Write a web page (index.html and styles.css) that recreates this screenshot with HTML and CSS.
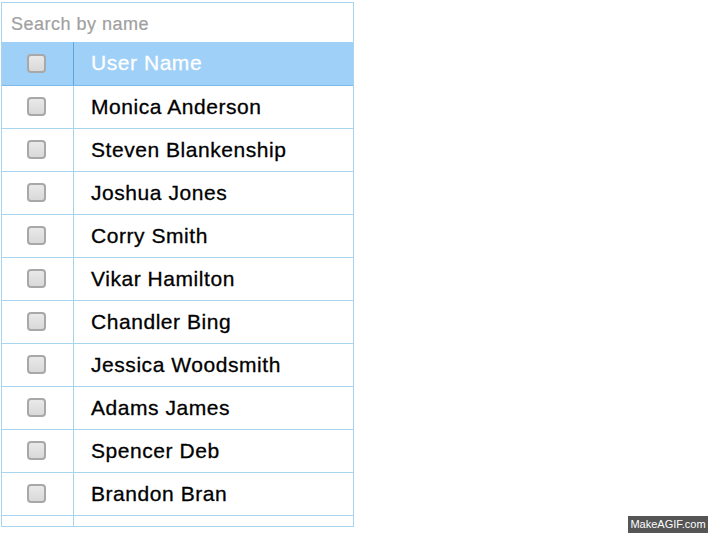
FILE: index.html
```html
<!DOCTYPE html>
<html>
<head>
<meta charset="utf-8">
<link rel="stylesheet" href="styles.css">
</head>
<body>
<div class="grid">
  <div class="search"><span class="placeholder">Search by name</span></div>
  <div class="row head">
    <div class="cell check"><span class="box"></span></div>
    <div class="cell name">User Name</div>
  </div>
  <div class="body">
    <div class="row"><div class="cell check"><span class="box"></span></div><div class="cell name">Monica Anderson</div></div>
    <div class="row"><div class="cell check"><span class="box"></span></div><div class="cell name">Steven Blankenship</div></div>
    <div class="row"><div class="cell check"><span class="box"></span></div><div class="cell name">Joshua Jones</div></div>
    <div class="row"><div class="cell check"><span class="box"></span></div><div class="cell name">Corry Smith</div></div>
    <div class="row"><div class="cell check"><span class="box"></span></div><div class="cell name">Vikar Hamilton</div></div>
    <div class="row"><div class="cell check"><span class="box"></span></div><div class="cell name">Chandler Bing</div></div>
    <div class="row"><div class="cell check"><span class="box"></span></div><div class="cell name">Jessica Woodsmith</div></div>
    <div class="row"><div class="cell check"><span class="box"></span></div><div class="cell name">Adams James</div></div>
    <div class="row"><div class="cell check"><span class="box"></span></div><div class="cell name">Spencer Deb</div></div>
    <div class="row"><div class="cell check"><span class="box"></span></div><div class="cell name">Brandon Bran</div></div>
    <div class="row"><div class="cell check"></div><div class="cell name"></div></div>
  </div>
</div>
<div class="badge">MakeAGIF.com</div>
</body>
</html>
```
FILE: styles.css
```css
html, body {
  margin: 0;
  padding: 0;
  background: #ffffff;
  font-family: "Liberation Sans", Arial, sans-serif;
}
body {
  width: 708px;
  height: 533px;
  position: relative;
  overflow: hidden;
}
.grid {
  margin: 2px 0 0 1px;
  width: 353px;
  height: 525px;
  border: 1px solid #a9d4ee;
  overflow: hidden;
  box-sizing: border-box;
}
.search {
  height: 39px;
  display: flex;
  align-items: center;
  padding: 3px 0 0 9px;
  box-sizing: border-box;
}
.placeholder {
  color: #a0a0a0;
  font-size: 18px;
  letter-spacing: 0.5px;
  -webkit-text-stroke: 0.2px #a0a0a0;
}
.row {
  display: flex;
  height: 43px;
  border-bottom: 1px solid #a9d4ee;
  box-sizing: border-box;
}
.head {
  background: #9fd0f8;
  border-bottom-color: #7cb9e6;
  height: 44px;
}
.cell {
  display: flex;
  align-items: center;
}
.check {
  width: 72px;
  border-right: 1px solid #a9d4ee;
  justify-content: center;
  box-sizing: border-box;
  padding: 0 3px 1px 0;
}
.head .check {
  border-right-color: #5ea6dc;
}
.name {
  padding: 0 0 1px 17px;
  font-size: 21px;
  letter-spacing: 0.55px;
  color: #000;
  -webkit-text-stroke: 0.3px #000;
}
.head .name {
  color: #ffffff;
  -webkit-text-stroke: 0.3px #ffffff;
}
.box {
  width: 19px;
  height: 19px;
  box-sizing: border-box;
  border: 2px solid #a8a8a8;
  border-radius: 4px;
  background: linear-gradient(#e9e9e9, #d9d9d9);
}
.badge {
  position: absolute;
  right: 0;
  bottom: 0;
  width: 80px;
  height: 17px;
  background: #555555;
  color: #ffffff;
  font-size: 11px;
  line-height: 17px;
  text-align: center;
}
```
